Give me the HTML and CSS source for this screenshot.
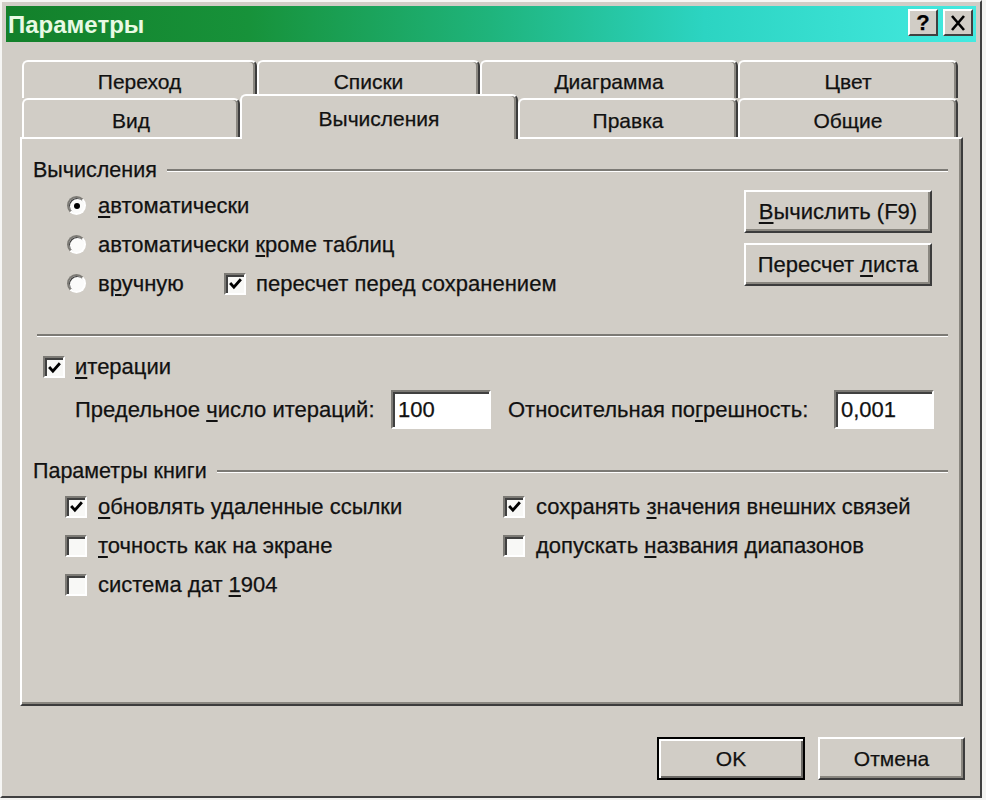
FILE: index.html
```html
<!DOCTYPE html>
<html lang="ru">
<head>
    <meta charset="UTF-8">
    <title>Параметры</title>
    <link rel="stylesheet" href="styles.css">
</head>
<body>
    <div class="window">
        <div class="titlebar">
            <span class="title">Параметры</span>
            <div class="title-buttons">
                <span class="tbtn">?</span>
                <span class="tbtn">
                    <svg width="16" height="16" viewBox="0 0 16 16"><path d="M2 1 L14 15 M14 1 L2 15" stroke="#000" stroke-width="2.6" fill="none"/></svg>
                </span>
            </div>
        </div>

        <div class="tabs">
            <div class="tab-row back">
                <div class="tab">Переход</div>
                <div class="tab">Списки</div>
                <div class="tab">Диаграмма</div>
                <div class="tab">Цвет</div>
            </div>
            <div class="tab-row front">
                <div class="tab">Вид</div>
                <div class="tab active">Вычисления</div>
                <div class="tab">Правка</div>
                <div class="tab">Общие</div>
            </div>
        </div>

        <div class="panel">
            <div class="group-head"><span>Вычисления</span><i class="rule"></i></div>

            <div class="calc">
                <div class="calc-options">
                    <div class="opt"><span class="radio on"></span><span><u>а</u>втоматически</span></div>
                    <div class="opt"><span class="radio"></span><span>автоматически <u>к</u>роме таблиц</span></div>
                    <div class="opt">
                        <div class="opt manual"><span class="radio"></span><span>в<u>р</u>учную</span></div>
                        <span class="check on"><svg width="15" height="15" viewBox="0 0 14 14"><path d="M2 6.5 L5.5 10.5 L12 3" stroke="#000" stroke-width="2.6" fill="none"/></svg></span>
                        <span>пересчет перед сохранением</span>
                    </div>
                </div>
                <div class="calc-buttons">
                    <button class="btn wide"><u>В</u>ычислить (F9)</button>
                    <button class="btn wide">Пересчет <u>л</u>иста</button>
                </div>
            </div>

            <div class="sep"></div>

            <div class="iter">
                <span class="check on"><svg width="15" height="15" viewBox="0 0 14 14"><path d="M2 6.5 L5.5 10.5 L12 3" stroke="#000" stroke-width="2.6" fill="none"/></svg></span>
                <span><u>и</u>терации</span>
            </div>

            <div class="limits">
                <span class="lbl-count">Предельное <u>ч</u>исло итераций:</span>
                <span class="field">100</span>
                <span class="lbl-error">Относительная по<u>г</u>решность:</span>
                <span class="field">0,001</span>
            </div>

            <div class="group-head second"><span>Параметры книги</span><i class="rule"></i></div>

            <div class="book">
                <div class="opt">
                    <span class="check on"><svg width="15" height="15" viewBox="0 0 14 14"><path d="M2 6.5 L5.5 10.5 L12 3" stroke="#000" stroke-width="2.6" fill="none"/></svg></span>
                    <span><u>о</u>бновлять удаленные ссылки</span>
                </div>
                <div class="opt">
                    <span class="check on"><svg width="15" height="15" viewBox="0 0 14 14"><path d="M2 6.5 L5.5 10.5 L12 3" stroke="#000" stroke-width="2.6" fill="none"/></svg></span>
                    <span>сохранять <u>з</u>начения внешних связей</span>
                </div>
                <div class="opt">
                    <span class="check"></span>
                    <span><u>т</u>очность как на экране</span>
                </div>
                <div class="opt">
                    <span class="check"></span>
                    <span>допускать <u>н</u>азвания диапазонов</span>
                </div>
                <div class="opt">
                    <span class="check"></span>
                    <span>система дат <u>1</u>904</span>
                </div>
            </div>
        </div>

        <div class="dialog-buttons">
            <button class="btn ok">OK</button>
            <button class="btn cancel">Отмена</button>
        </div>
    </div>
</body>
</html>
```

FILE: styles.css
```css
* {
    box-sizing: border-box;
}

body {
    margin: 0;
    background-color: #f3f3f1;
    font-family: "Liberation Sans", Arial, sans-serif;
    font-size: 22px;
    color: #111;
    -webkit-text-stroke: 0.25px #111;
}

u {
    text-decoration-thickness: 2px;
    text-underline-offset: 3px;
}

.window {
    width: 982px;
    height: 798px;
    background-color: #d1cdc6;
    border: 2px solid;
    border-color: #f6f6f4 #404040 #404040 #f6f6f4;
    padding: 4px;
}

/* barra de titulo */
.titlebar {
    height: 36px;
    display: flex;
    justify-content: space-between;
    align-items: flex-start;
    padding: 3px 3px 0 2px;
    background: linear-gradient(to right, #13802a 0%, #17923a 25%, #1fb47c 50%, #2cd4c2 72%, #44eae0 100%);
}

.title {
    color: #e8fae4;
    -webkit-text-stroke: 0;
    font-weight: bold;
    font-size: 24px;
    line-height: 32px;
}

.title-buttons {
    display: flex;
    gap: 5px;
}

.tbtn {
    width: 30px;
    height: 27px;
    display: flex;
    align-items: center;
    justify-content: center;
    background-color: #d1cdc6;
    border: 2px solid;
    border-color: #fff #404040 #404040 #fff;
    font-weight: bold;
    font-size: 22px;
    color: #000;
}

/* pestañas */
.tabs {
    margin: 18px 0 0 16px;
    font-size: 21px;
}

.tab-row {
    display: grid;
}

.tab-row.back {
    grid-template-columns: 235px 223px 258px 220px;
    height: 38px;
}

.tab-row.front {
    grid-template-columns: 218px 278px 220px 220px;
    height: 43px;
    margin-top: -4px;
    align-items: end;
    position: relative;
    z-index: 1;
}

.tab {
    height: 39px;
    display: flex;
    align-items: center;
    justify-content: center;
    padding-top: 4px;
    background-color: #d1cdc6;
    border: 2px solid;
    border-color: #fff #3c3c3c transparent #fff;
    border-bottom: none;
    border-radius: 6px 6px 0 0;
    box-shadow: inset -2px 0 0 #8a8780;
}

.back .tab {
    height: 38px;
}

.tab.active {
    height: 45px;
    margin-bottom: -2px;
    padding-bottom: 2px;
    position: relative;
    z-index: 2;
}

/* panel */
.panel {
    height: 569px;
    margin: 0 13px 0 14px;
    padding: 18px 13px 0 11px;
    border: 2px solid;
    border-color: #fff #3c3c3c #3c3c3c #fff;
    box-shadow: inset -2px -2px 0 #8a8780;
}

.group-head {
    height: 26px;
    display: flex;
    align-items: center;
    font-size: 21.5px;
}

.group-head.second {
    margin-top: 29px;
}

.rule {
    flex: 1;
    height: 3px;
    margin-left: 10px;
    border-top: 2px solid #7c7a75;
    border-bottom: 1px solid #fff;
}

.sep {
    height: 3px;
    margin: 31px 0 0 4px;
    border-top: 2px solid #7c7a75;
    border-bottom: 1px solid #fff;
}

.calc {
    display: flex;
    margin-top: 3px;
}

.calc-options {
    padding-left: 34px;
}

.opt {
    height: 39px;
    display: flex;
    align-items: center;
}

.opt.manual {
    width: 157px;
}

.calc-buttons {
    margin: 4px 16px 0 auto;
    display: flex;
    flex-direction: column;
    gap: 10px;
}

.radio {
    width: 19px;
    height: 19px;
    margin-right: 12px;
    position: relative;
    border-radius: 50%;
    background-color: #fbfbfa;
    border: 2px solid;
    border-color: #7c7a75 #fff #fff #7c7a75;
    box-shadow: inset 1px 1px 0 #404040;
}

.radio.on::after {
    content: '';
    position: absolute;
    left: 50%;
    top: 50%;
    width: 6px;
    height: 6px;
    margin: -3px 0 0 -3px;
    border-radius: 50%;
    background-color: #000;
}

.check {
    width: 22px;
    height: 22px;
    flex-shrink: 0;
    margin-right: 10px;
    display: flex;
    align-items: center;
    justify-content: center;
    background-color: #f8f8f6;
    border: 2px solid;
    border-color: #7c7a75 #fff #fff #7c7a75;
    box-shadow: inset 2px 2px 0 #404040;
}

.iter {
    height: 30px;
    margin-top: 15px;
    padding-left: 10px;
    display: flex;
    align-items: center;
}

.limits {
    height: 39px;
    margin-top: 8px;
    padding-left: 42px;
    display: flex;
    align-items: center;
}

.lbl-count {
    width: 316px;
}

.lbl-error {
    width: 326px;
    margin-left: 17px;
}

.field {
    width: 100px;
    height: 39px;
    display: flex;
    align-items: center;
    padding-left: 5px;
    background-color: #fff;
    border: 2px solid;
    border-color: #7c7a75 #fff #fff #7c7a75;
    box-shadow: inset 2px 2px 0 #404040;
}

.book {
    display: grid;
    grid-template-columns: 438px auto;
    grid-auto-rows: 39px;
    margin-top: 3px;
    padding-left: 32px;
}

.book .check {
    margin-right: 11px;
}

/* botones */
.btn {
    height: 43px;
    padding: 0;
    font: inherit;
    color: #111;
    background-color: #d1cdc6;
    border: 2px solid;
    border-color: #fff #3c3c3c #3c3c3c #fff;
    box-shadow: inset -2px -2px 0 #8a8780;
}

.btn.wide {
    width: 188px;
}

.dialog-buttons {
    display: flex;
    justify-content: flex-end;
    gap: 13px;
    margin: 31px 11px 0 0;
    font-size: 21px;
}

.btn.ok {
    width: 148px;
    border-color: #000;
    box-shadow: inset 2px 2px 0 #fff, inset -2px -2px 0 #6c6a66;
}

.btn.cancel {
    width: 147px;
}
```
